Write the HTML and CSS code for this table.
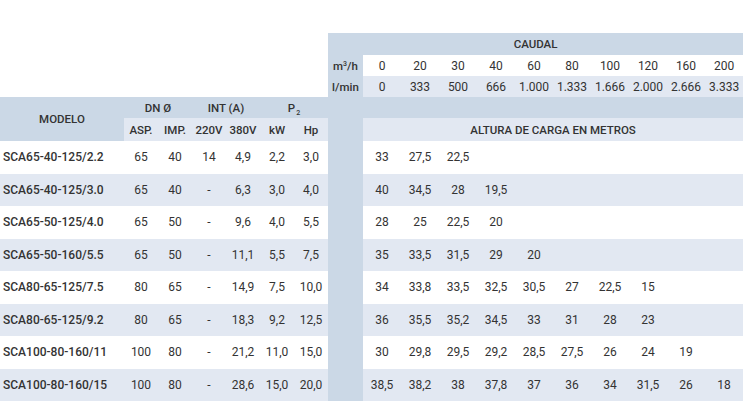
FILE: index.html
```html
<!DOCTYPE html>
<html lang="es">
<head>
<meta charset="utf-8">
<title>Tabla SCA</title>
<link rel="stylesheet" href="styles.css">
</head>
<body>
<table class="tabla">
  <colgroup>
    <col class="c-modelo">
    <col class="c-sm"><col class="c-sm"><col class="c-sm"><col class="c-sm"><col class="c-sm"><col class="c-sm">
    <col class="c-gap">
    <col class="c-q"><col class="c-q"><col class="c-q"><col class="c-q"><col class="c-q"><col class="c-q"><col class="c-q"><col class="c-q"><col class="c-q"><col class="c-q">
  </colgroup>
  <thead>
    <tr class="r-caudal">
      <td class="blank" colspan="7" rowspan="3"></td>
      <th class="gray" colspan="11">CAUDAL</th>
    </tr>
    <tr class="r-q">
      <th class="gray">m<sup>3</sup>/h</th>
      <td>0</td><td>20</td><td>30</td><td>40</td><td>60</td><td>80</td><td>100</td><td>120</td><td>160</td><td>200</td>
    </tr>
    <tr class="r-q light">
      <th class="gray">l/min</th>
      <td>0</td><td>333</td><td>500</td><td>666</td><td>1.000</td><td>1.333</td><td>1.666</td><td>2.000</td><td>2.666</td><td>3.333</td>
    </tr>
    <tr class="r-h1 gray">
      <th rowspan="2">MODELO</th>
      <th colspan="2">DN Ø</th>
      <th colspan="2">INT (A)</th>
      <th colspan="2">P<sub>2</sub></th>
      <th colspan="11"></th>
    </tr>
    <tr class="r-h2 light">
      <th>ASP.</th><th>IMP.</th><th>220V</th><th>380V</th><th>kW</th><th>Hp</th>
      <th class="gray"></th>
      <th colspan="10">ALTURA DE CARGA EN METROS</th>
    </tr>
  </thead>
  <tbody>
    <tr>
      <th class="model">SCA65-40-125/2.2</th>
      <td>65</td><td>40</td><td>14</td><td>4,9</td><td>2,2</td><td>3,0</td>
      <td class="gray"></td>
      <td>33</td><td>27,5</td><td>22,5</td><td></td><td></td><td></td><td></td><td></td><td></td><td></td>
    </tr>
    <tr class="light">
      <th class="model">SCA65-40-125/3.0</th>
      <td>65</td><td>40</td><td>-</td><td>6,3</td><td>3,0</td><td>4,0</td>
      <td class="gray"></td>
      <td>40</td><td>34,5</td><td>28</td><td>19,5</td><td></td><td></td><td></td><td></td><td></td><td></td>
    </tr>
    <tr>
      <th class="model">SCA65-50-125/4.0</th>
      <td>65</td><td>50</td><td>-</td><td>9,6</td><td>4,0</td><td>5,5</td>
      <td class="gray"></td>
      <td>28</td><td>25</td><td>22,5</td><td>20</td><td></td><td></td><td></td><td></td><td></td><td></td>
    </tr>
    <tr class="light">
      <th class="model">SCA65-50-160/5.5</th>
      <td>65</td><td>50</td><td>-</td><td>11,1</td><td>5,5</td><td>7,5</td>
      <td class="gray"></td>
      <td>35</td><td>33,5</td><td>31,5</td><td>29</td><td>20</td><td></td><td></td><td></td><td></td><td></td>
    </tr>
    <tr>
      <th class="model">SCA80-65-125/7.5</th>
      <td>80</td><td>65</td><td>-</td><td>14,9</td><td>7,5</td><td>10,0</td>
      <td class="gray"></td>
      <td>34</td><td>33,8</td><td>33,5</td><td>32,5</td><td>30,5</td><td>27</td><td>22,5</td><td>15</td><td></td><td></td>
    </tr>
    <tr class="light">
      <th class="model">SCA80-65-125/9.2</th>
      <td>80</td><td>65</td><td>-</td><td>18,3</td><td>9,2</td><td>12,5</td>
      <td class="gray"></td>
      <td>36</td><td>35,5</td><td>35,2</td><td>34,5</td><td>33</td><td>31</td><td>28</td><td>23</td><td></td><td></td>
    </tr>
    <tr>
      <th class="model">SCA100-80-160/11</th>
      <td>100</td><td>80</td><td>-</td><td>21,2</td><td>11,0</td><td>15,0</td>
      <td class="gray"></td>
      <td>30</td><td>29,8</td><td>29,5</td><td>29,2</td><td>28,5</td><td>27,5</td><td>26</td><td>24</td><td>19</td><td></td>
    </tr>
    <tr class="light">
      <th class="model">SCA100-80-160/15</th>
      <td>100</td><td>80</td><td>-</td><td>28,6</td><td>15,0</td><td>20,0</td>
      <td class="gray"></td>
      <td>38,5</td><td>38,2</td><td>38</td><td>37,8</td><td>37</td><td>36</td><td>34</td><td>31,5</td><td>26</td><td>18</td>
    </tr>
  </tbody>
</table>
</body>
</html>
```

FILE: styles.css
```css
html, body {
  margin: 0;
  padding: 0;
  background: #ffffff;
}

body {
  padding-top: 33px;
  font-family: Roboto, "Liberation Sans", sans-serif;
  color: #333333;
}

.tabla {
  border-collapse: collapse;
  border-spacing: 0;
  table-layout: fixed;
  width: 743px;
}

.c-modelo { width: 124px; }
.c-sm { width: 34px; }
.c-gap { width: 35px; }
.c-q { width: 38px; }

.tabla th,
.tabla td {
  padding: 0;
  text-align: center;
  vertical-align: middle;
  white-space: nowrap;
  font-size: 12px;
  line-height: 14px;
}

.tabla th {
  font-weight: 500;
}

.tabla thead th {
  font-size: 11.5px;
}

.tabla .blank { background: #ffffff; }

.gray,
.tabla .gray { background: #cbd8e6; }

.light { background: #e2e8f2; }

.r-caudal { height: 22px; }
.r-q { height: 21px; }
.r-h1 { height: 21px; }
.r-h2 { height: 23px; }

.tabla tbody tr { height: 32.5px; }

.tabla .model {
  text-align: left;
  padding-left: 3px;
  font-size: 12px;
}

sup {
  font-size: 7px;
  line-height: 0;
  vertical-align: 4px;
}

sub {
  font-size: 7px;
  line-height: 0;
  vertical-align: -3px;
  margin-left: 1px;
}
```
